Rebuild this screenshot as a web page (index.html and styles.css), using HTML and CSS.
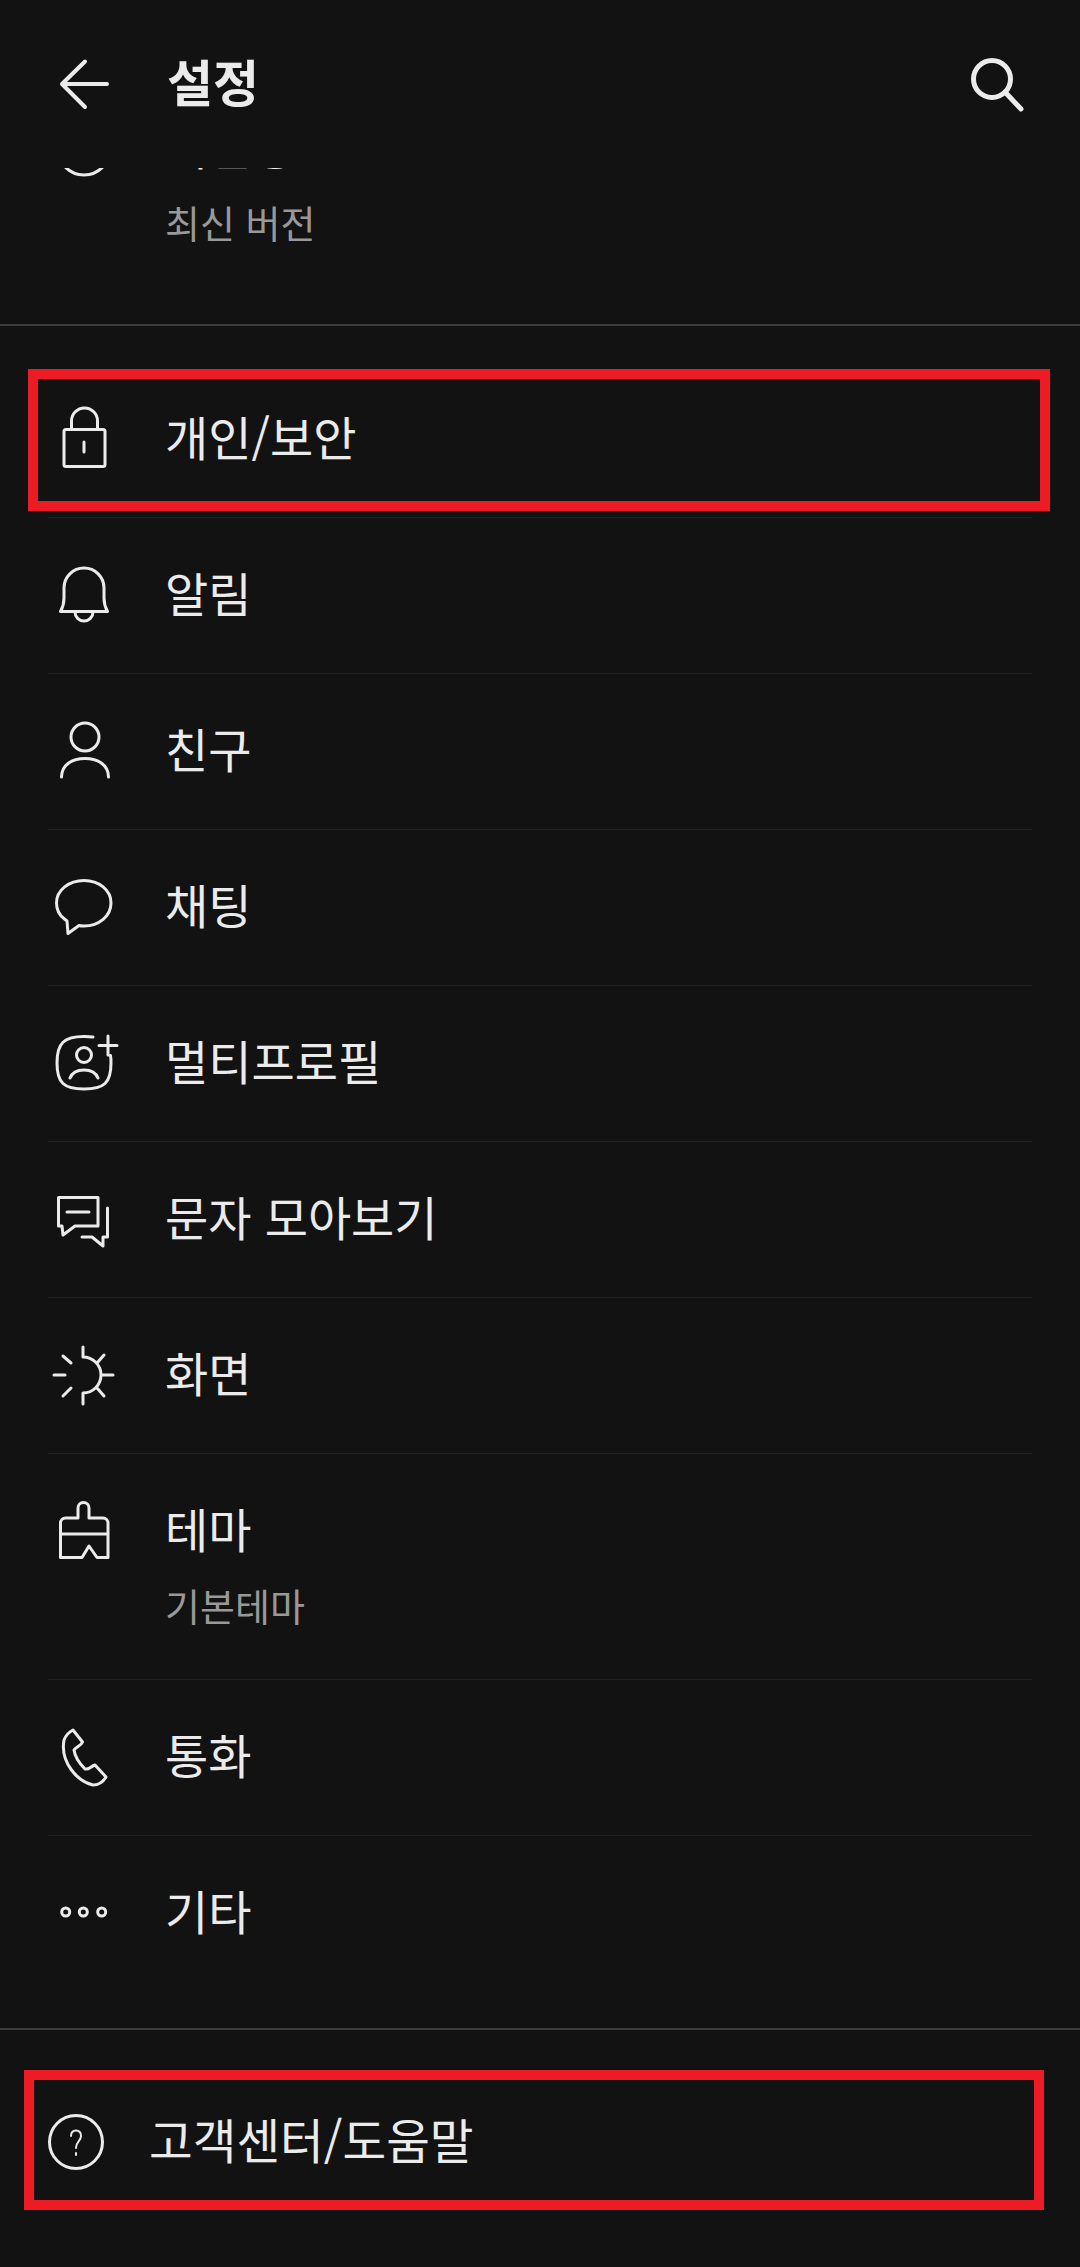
FILE: index.html
```html
<!DOCTYPE html>
<html lang="ko">
<head>
  <meta charset="UTF-8">
  <meta name="viewport" content="width=device-width, initial-scale=1.0">
  <title>설정</title>
  <link rel="stylesheet" href="styles.css">
</head>
<body>
  <header class="topbar">
    <svg class="icon topbar-back" viewBox="0 0 72 72"><path d="M37 13.500 14 36 37 59M15 36H59"/></svg>
    <h1 class="topbar-title">설정</h1>
    <svg class="icon topbar-search" viewBox="0 0 72 72"><circle cx="32" cy="31" r="18.500"/><path d="M45 44 61 61"/></svg>
  </header>

  <section class="version">
    <div class="row">
      <svg class="icon" viewBox="0 0 72 72"><circle cx="36" cy="36" r="26"/></svg>
      <div class="row-text">
        <div class="row-title">버전정보</div>
        <div class="row-sub">최신 버전</div>
      </div>
    </div>
  </section>

  <section class="list">
    <div class="row row-marked">
      <svg class="icon" viewBox="0 0 72 72"><rect x="16" y="25.500" width="41" height="37" rx="2"/><path d="M23.500 25V17a13 13 0 0 1 26 0v8M36 38v10"/></svg>
      <div class="row-text"><div class="row-title">개인/보안</div></div>
    </div>
    <div class="row">
      <svg class="icon" viewBox="0 0 72 72"><path d="M12.500 51.500C15 47 16 43 16 38V28a20 20 0 0 1 40 0V38C56 43 57 47 59.500 51.500ZM27 52a9 9 0 0 0 18 0"/></svg>
      <div class="row-text"><div class="row-title">알림</div></div>
    </div>
    <div class="row">
      <svg class="icon" viewBox="0 0 72 72"><circle cx="37" cy="21" r="14"/><path d="M13.500 61C13.500 49 24 42.500 37 42.500S60.500 49 60.500 61"/></svg>
      <div class="row-text"><div class="row-title">친구</div></div>
    </div>
    <div class="row">
      <svg class="icon" viewBox="0 0 72 72"><path d="M16.500 47C11 43 8.500 37.500 8.500 31 8.500 18 21 8.500 36 8.500S63 18 63 31 51 54 36 54C34 54 32.500 54 31 53.500L20 61.500 19 49Z"/></svg>
      <div class="row-text"><div class="row-title">채팅</div></div>
    </div>
    <div class="row">
      <svg class="icon" viewBox="0 0 72 72"><path d="M45 9C42 8.500 39 8.500 36 8.500 16 8.500 9 15 9 35 9 55 16 61 36 61 56 61 63 55 63 35 63 32 63 30 62.500 27.500M60 8V27M51 17.500H69"/><circle cx="36" cy="27" r="7.500"/><path d="M22 50C24 45 29 42 36 42S48 45 50 50"/></svg>
      <div class="row-text"><div class="row-title">멀티프로필</div></div>
    </div>
    <div class="row">
      <svg class="icon" viewBox="0 0 72 72"><path d="M10.500 13.500H50V42H27L15 51 14 42H10.500ZM19 28H41M59.500 24V53H55V62L44 53H34"/></svg>
      <div class="row-text"><div class="row-title">문자 모아보기</div></div>
    </div>
    <div class="row">
      <svg class="icon" viewBox="0 0 72 72"><path d="M35 7V17a18 18 0 0 1 0 36V64M54 35H65M49 23 56 15M49 48 56 56M6 35H17M15 16 23 23M15 56 23 48"/></svg>
      <div class="row-text"><div class="row-title">화면</div></div>
    </div>
    <div class="row">
      <svg class="icon" viewBox="0 0 72 72"><path d="M12.500 27a5 5 0 0 1 5-5H30V12a5.500 5.500 0 0 1 11 0V22H55a5 5 0 0 1 5 5V61.500H49L41 50 34 61.500H12.500ZM12.500 38H60"/></svg>
      <div class="row-text">
        <div class="row-title">테마</div>
        <div class="row-sub">기본테마</div>
      </div>
    </div>
    <div class="row">
      <svg class="icon" viewBox="0 0 72 72"><path d="M16 18C18 13 21 10 25 8L34.500 20C33 24 28 25 26 28 27 35 32 42 37 47 41 48 43 44 47 43L58 55C55 60 50 63 45 63 28 59 14 40 15.500 22Z"/></svg>
      <div class="row-text"><div class="row-title">통화</div></div>
    </div>
    <div class="row">
      <svg class="icon" viewBox="0 0 72 72"><circle cx="17.700" cy="34" r="4"/><circle cx="35.300" cy="34" r="4"/><circle cx="53.700" cy="34" r="4"/></svg>
      <div class="row-text"><div class="row-title">기타</div></div>
    </div>
  </section>

  <section class="help">
    <div class="help-box">
      <svg class="icon" viewBox="0 0 72 72"><circle cx="36" cy="35" r="26.500"/><path class="thin" d="M31 29C31 25 33 23.500 36 23.500S41 25 41 29C41 34 36 34.500 36 41M36 46V48"/></svg>
      <div class="row-title help-title">고객센터/도움말</div>
    </div>
  </section>
</body>
</html>
```

FILE: styles.css
```css
* {
  margin: 0;
  padding: 0;
  box-sizing: border-box;
}
html,
body {
  height: 2267px;
  overflow: hidden;
}
body {
  background-color: #121212;
  color: #ebebeb;
  font-family: "Noto Sans CJK KR", "Noto Sans", sans-serif;
}
.icon {
  flex: none;
  width: 72px;
  height: 72px;
  fill: none;
  stroke: #ebebeb;
  stroke-width: 3;
  stroke-linejoin: round;
  stroke-linecap: round;
}
.icon .thin {
  stroke-width: 2;
}
.topbar {
  position: relative;
  z-index: 1;
  display: flex;
  align-items: center;
  height: 168px;
  padding: 0 48px;
  background-color: #121212;
}
.topbar-back {
  stroke-width: 4;
}
.topbar-title {
  margin: -8px 0 0 47px;
  font-size: 50px;
  font-weight: 700;
  line-height: 72px;
}
.topbar-search {
  margin-left: auto;
  stroke-width: 5;
}
.version {
  margin-top: -97px;
  padding-bottom: 28px;
  border-bottom: 2px solid #3b3b3b;
}
.version .row {
  border-bottom: none;
}
.list {
  padding: 36px 0 37px;
  border-bottom: 2px solid #3b3b3b;
}
.row {
  position: relative;
  display: flex;
  align-items: flex-start;
  margin: 0 48px;
  padding: 42px 0 41px;
  border-bottom: 1px solid #222;
}
.list .row:last-child {
  border-bottom: none;
}
.row-text {
  margin-left: 45px;
}
.row-title {
  padding-bottom: 8px;
  font-size: 47px;
  line-height: 64px;
}
.row-sub {
  margin: 12px 0 8px;
  font-size: 38px;
  line-height: 50px;
  color: #999;
}
.row-marked::after {
  content: "";
  position: absolute;
  top: 7px;
  bottom: 6px;
  left: -20px;
  right: -18px;
  border: 10px solid #ed1c24;
}
.help {
  padding-top: 40px;
}
.help-box {
  display: flex;
  align-items: center;
  width: 1020px;
  height: 140px;
  margin-left: 24px;
  padding: 6px 0 0 6px;
  border: 10px solid #ed1c24;
}
.help-title {
  margin-left: 37px;
  font-size: 47.5px;
}
```
